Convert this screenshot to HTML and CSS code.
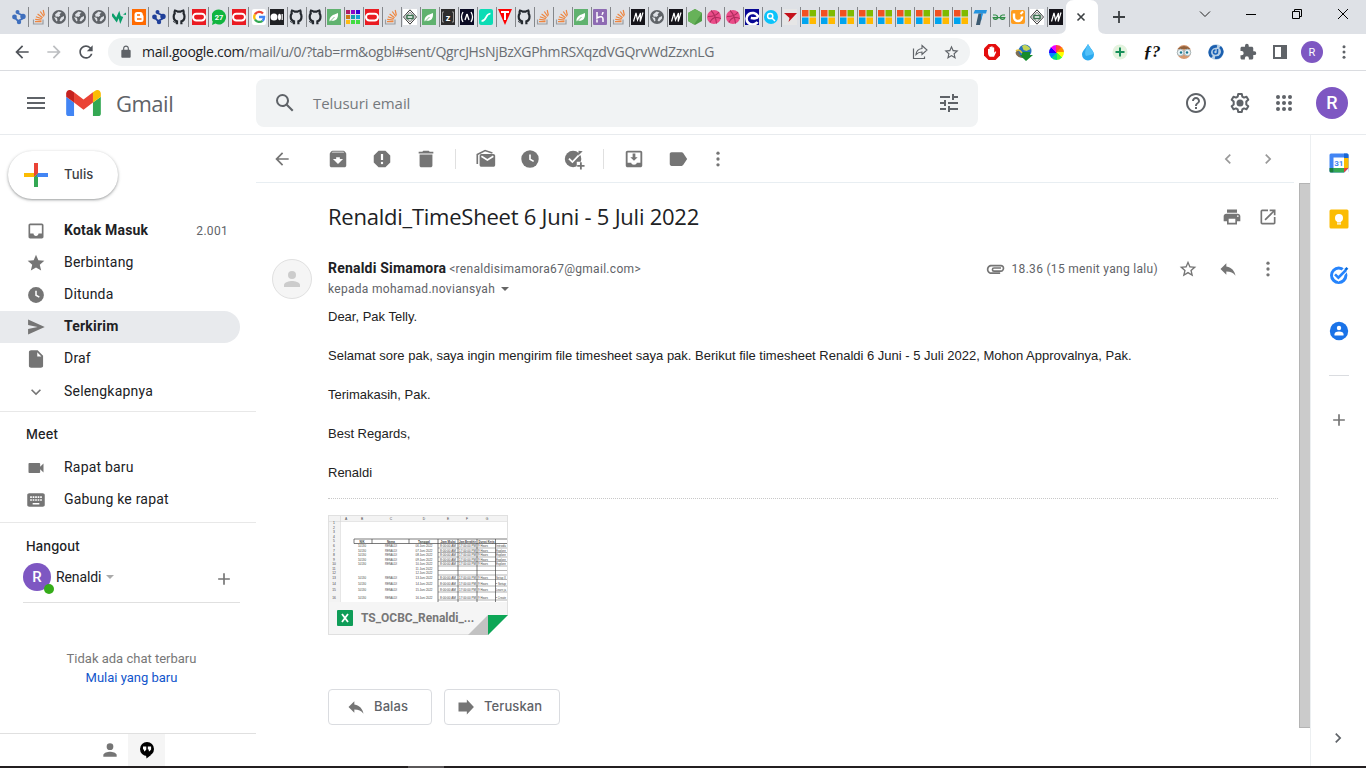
FILE: index.html
```html
<!DOCTYPE html>
<html lang="id">
<head>
<meta charset="utf-8">
<title>Renaldi_TimeSheet 6 Juni - 5 Juli 2022 - Gmail</title>
<link rel="stylesheet" href="styles.css">
</head>
<body>
<svg class="sprite" aria-hidden="true">
  <!-- Tab favicons, 14x16 -->
  <symbol id="f-nodes" viewBox="0 0 14 16"><path d="M5 4 L10 6 L10 10 L6 12 L2.500 8.500" fill="none" stroke="currentColor" stroke-width="1.800"/><circle cx="5.500" cy="3" r="2" fill="currentColor"/><circle cx="2.500" cy="8" r="2.400" fill="currentColor"/><circle cx="11" cy="7.500" r="2.700" fill="currentColor"/><circle cx="7" cy="13" r="2.200" fill="currentColor"/></symbol>
  <symbol id="f-so" viewBox="0 0 14 16"><path d="M1.500 10.500V15h9.500v-4.500" fill="none" stroke="#9a9da1" stroke-width="1.200"/><path d="M3 12.700h6.500M3.200 10.400l6.300.8M3.900 7.800l6 2M5.600 5l5 3.700M8.300 2.500l3.500 5M11.200 1l1.200 5.500" stroke="#ee8640" stroke-width="1.200"/></symbol>
  <symbol id="f-globe" viewBox="0 0 14 16"><circle cx="7" cy="8" r="7" fill="#5f6368"/><path d="M3 5.500l3.500-3 3 1-2 1.800.8 1.200-2 1.500-1.500-.8-.8 1.300M9 8.500l3-1.500v2.500l-3 3-1.500-1z" fill="#dee1e6"/><path d="M2 8l3 1 .5 2.500-1 1z" fill="#dee1e6"/></symbol>
  <symbol id="f-w" viewBox="0 0 14 16"><path d="M0 5l4.500 6L7 5.500 8.500 11 10 7.500" fill="none" stroke="#0b9f6b" stroke-width="2.600"/><path d="M11 5.500l3-2v2.500z" fill="#0b9f6b"/></symbol>
  <symbol id="f-blogger" viewBox="0 0 14 16"><path d="M0 0h14v16H0z" fill="#ff6a00"/><path d="M5.500 3h2.700a2.500 2.500 0 0 1 2.500 2.600l.8 1.400v3.500a2.500 2.500 0 0 1-2.500 2.500H5a2.500 2.500 0 0 1-2.500-2.500v-5A2.500 2.500 0 0 1 5.500 3z" fill="#fff"/><path d="M5 6h3M5 10h4.500" stroke="#ff6a00" stroke-width="1.300"/></symbol>
  <symbol id="f-github" viewBox="0 0 14 16"><path d="M5 15.300v-3C2.800 11.800 1.700 9.800 1.700 7.500c0-1.200.4-2.200 1-3C2.400 3.400 2.500 2.300 3 1.500c1.200.1 2 .6 2.700 1.100h2.900c.7-.5 1.500-1 2.700-1.100.4.800.5 1.900.3 3 .6.800.9 1.800.9 3 0 2.300-1 4.300-3.100 4.800v3" fill="none" stroke="#24292f" stroke-width="2.200"/><path d="M1 12.500c1.300 0 1.400 1.500 3.500 1.300" fill="none" stroke="#24292f"/></symbol>
  <symbol id="f-oracle" viewBox="0 0 14 16"><path d="M0 0h14v16H0z" fill="#ea1b22"/><rect x="1" y="4.800" width="12" height="6.600" rx="3.300" fill="none" stroke="#fff" stroke-width="2"/></symbol>
  <symbol id="f-google" viewBox="0 0 14 16"><rect width="14" height="16" rx="2" fill="#fff"/><path d="M11 4.500A5 5 0 0 0 3 5.300" fill="none" stroke="#ea4335" stroke-width="2.300"/><path d="M3 5.300a5 5 0 0 0 0 5.200" fill="none" stroke="#fbbc05" stroke-width="2.300"/><path d="M3 10.500a5 5 0 0 0 7.500 1.300" fill="none" stroke="#34a853" stroke-width="2.300"/><path d="M10.500 11.800A5 5 0 0 0 12.100 8H7" fill="none" stroke="#4285f4" stroke-width="2.300"/></symbol>
  <symbol id="f-medium" viewBox="0 0 14 16"><path d="M0 0h14v16H0z"/><circle cx="4" cy="8" r="3.500" fill="#fff"/><ellipse cx="9.500" cy="8" rx="1.500" ry="3.300" fill="#fff"/><path d="M12.200 5v6" stroke="#fff" stroke-width="1.200"/></symbol>
  <symbol id="f-leaf" viewBox="0 0 14 16"><path d="M0 0h14v16H0z" fill="#60b26f"/><path d="M2.500 12.500C2 7 6 6 11 4c.5 6-2.500 8.500-7 7.700z" fill="#fff"/><path d="M2.500 13l5-5" stroke="#60b26f" stroke-width=".8"/></symbol>
  <symbol id="f-grid" viewBox="0 0 14 16"><path d="M0 1h4v4H0z" fill="#b21e64"/><path d="M5 1h4v4H5z" fill="#8d06c7"/><path d="M10 1h4v4h-4z" fill="#3903d5"/><path d="M0 6h4v4H0z" fill="#ce7b13"/><path d="M5 6h4v4H5z" fill="#139db1"/><path d="M10 6h4v4h-4z" fill="#13a4d2"/><path d="M0 11h4v4H0z" fill="#ffbb12"/><path d="M5 11h9v4H5z" fill="#41dc42"/><path d="M9.500 11v4" stroke="#dee1e6"/></symbol>
  <symbol id="f-diamond" viewBox="0 0 14 16"><path d="M0 0h14v16H0z" fill="#fff"/><path d="M7 .8l6.500 7.200L7 15.200.5 8z" fill="none" stroke="#333"/><path d="M7 3.200L11.300 8 7 12.800 2.700 8z" fill="none" stroke="#444" stroke-width=".8"/><path d="M4 6.500h6v3H4z" fill="none" stroke="#3c7451" stroke-width="1.400"/></symbol>
  <symbol id="f-fcc" viewBox="0 0 14 16"><path d="M0 0h14v16H0z" fill="#0a0a23"/><path d="M3 3Q0 8 3 13M11 3q3 5 0 10M7 5L5 11M7 5l2 6" fill="none" stroke="#fff" stroke-width="1.300"/></symbol>
  <symbol id="f-teal" viewBox="0 0 14 16"><rect width="14" height="16" rx="2" fill="#0cdcb5"/><path d="M2.500 12c6 0 3-7 9-7.500" fill="none" stroke="#fff" stroke-width="1.700"/></symbol>
  <symbol id="f-t" viewBox="0 0 14 16"><path d="M0 0h14L7 16z" fill="#f00"/><path d="M3 3h8M7 3v8" stroke="#fff" stroke-width="2"/></symbol>
  <symbol id="f-heroku" viewBox="0 0 14 16"><rect width="14" height="16" rx="1" fill="#8e6bb3"/><path d="M4 3v6c4-2 6-1.500 6 1v3M10 3c0 1-.5 2-1.200 2.700M4 10.500v3" fill="none" stroke="#fff" stroke-width="1.500"/></symbol>
  <symbol id="f-m" viewBox="0 0 14 16"><path d="M0 0h14v16H0z" fill="#15141a"/><path d="M2.500 12.500L5 4l1.500 7L9.500 4l-.3 8.500 2.800-9" fill="none" stroke="#fff" stroke-width="1.200"/></symbol>
  <symbol id="f-node" viewBox="0 0 14 16"><path d="M7 0l7 4v8l-7 4-7-4V4z" fill="#4f9b46"/><path d="M7 0l7 4-8 11.500L0 12V4z" fill="#67b259"/></symbol>
  <symbol id="f-drib" viewBox="0 0 14 16"><circle cx="7" cy="8" r="7" fill="#ea4c89"/><path d="M4 1.500c3 3 5 7 5.500 13M1 7.500c5 0 9-1 11-4.500M3 13.500c2-5 6-6 11-4" fill="none" stroke="#ad2b5c" stroke-width="1.100"/></symbol>
  <symbol id="f-e" viewBox="0 0 14 16"><path d="M0 0h14v16H0z" fill="#070794"/><path d="M12.500 13A6 5.800 0 1 1 12.800 7c0 3-4.500 2.500-7 2" fill="none" stroke="#fff" stroke-width="2.600"/></symbol>
  <symbol id="f-search" viewBox="0 0 14 16"><circle cx="7" cy="8" r="7" fill="#0bc3fa"/><circle cx="6.200" cy="7" r="2.600" fill="none" stroke="#fff" stroke-width="1.500"/><path d="M8 9l3 3" stroke="#fff" stroke-width="1.500"/></symbol>
  <symbol id="f-red" viewBox="0 0 14 16"><path d="M0 0h14v16H0z" fill="#e6e6e6"/><path d="M1 4h13L5.500 13l1-4z" fill="#c4121b"/></symbol>
  <symbol id="f-ms" viewBox="0 0 14 16"><path d="M0 1h6.500v6.500H0z" fill="#f25022"/><path d="M7.500 1H14v6.500H7.500z" fill="#7fba00"/><path d="M0 8.500h6.500V15H0z" fill="#00a4ef"/><path d="M7.500 8.500H14V15H7.500z" fill="#ffb900"/></symbol>
  <symbol id="f-tt" viewBox="0 0 14 16"><path d="M2 1h12l-1 3.500H.5z" fill="#2494df"/><path d="M5.500 4.500h4L7 16H3z" fill="#3d5b72"/><path d="M8 4.500h2L8 12z" fill="#2494df"/></symbol>
  <symbol id="f-gg" viewBox="0 0 14 16"><path d="M1 6h2.500a2.200 2.200 0 1 1-2.300 2.600H12.800A2.200 2.200 0 1 1 10.500 6H13" fill="none" stroke="#2f8d46" stroke-width="1.200"/></symbol>
  <symbol id="f-u" viewBox="0 0 14 16"><rect y="1" width="14" height="14" rx="2" fill="#ff9d1e"/><path d="M3 4.500v3.500a4 4 0 0 0 8 0V7.500" fill="none" stroke="#fff" stroke-width="2.400"/><path d="M9.500 5L12 2.500" stroke="#fff" stroke-width="2"/></symbol>

  <!-- Interface icons, 24 grid -->
  <symbol id="i-back" viewBox="0 0 24 24"><path d="M20 11H7.830l5.590-5.590L12 4l-8 8 8 8 1.410-1.410L7.830 13H20v-2z"/></symbol>
  <symbol id="i-reload" viewBox="0 0 24 24"><path d="M17.650 6.350A7.958 7.958 0 0 0 12 4c-4.420 0-7.990 3.580-7.990 8s3.570 8 7.990 8c3.730 0 6.840-2.550 7.730-6h-2.080A5.990 5.990 0 0 1 12 18c-3.310 0-6-2.690-6-6s2.690-6 6-6c1.660 0 3.140.69 4.220 1.780L13 11h7V4l-2.350 2.350z"/></symbol>
  <symbol id="i-lock" viewBox="0 0 24 24"><path d="M18 8h-1V6c0-2.760-2.240-5-5-5S7 3.240 7 6v2H6c-1.100 0-2 .9-2 2v10c0 1.100.9 2 2 2h12c1.100 0 2-.9 2-2V10c0-1.100-.9-2-2-2zM9 8V6c0-1.660 1.340-3 3-3s3 1.340 3 3v2z"/></symbol>
  <symbol id="i-share" viewBox="0 0 16 16"><path d="M1.500 4.500v10h11v-2" fill="none" stroke="currentColor" stroke-width="1.200"/><path d="M10 1.500l5 4.500-5 4.500V8C7 8 5.500 9 4 10.500c.3-3.500 2-5.500 6-6z" fill="none" stroke="currentColor" stroke-width="1.100"/></symbol>
  <symbol id="i-staro" viewBox="0 0 24 24"><path d="M22 9.240l-7.190-.62L12 2 9.190 8.630 2 9.240l5.460 4.730L5.820 21 12 17.270 18.180 21l-1.630-7.030L22 9.240zM12 15.400l-3.760 2.270 1-4.280-3.320-2.880 4.380-.38L12 6.100l1.710 4.040 4.380.38-3.320 2.880 1 4.280L12 15.400z"/></symbol>
  <symbol id="i-star" viewBox="0 0 24 24"><path d="M12 17.270L18.180 21l-1.640-7.030L22 9.240l-7.190-.61L12 2 9.190 8.630 2 9.240l5.460 4.730L5.820 21z"/></symbol>
  <symbol id="i-puzzle" viewBox="0 0 24 24"><path d="M20.500 11H19V7c0-1.100-.9-2-2-2h-4V3.500a2.500 2.500 0 0 0-5 0V5H4c-1.100 0-1.990.9-1.990 2v3.800H3.500a2.700 2.700 0 0 1 0 5.400H2V20c0 1.100.9 2 2 2h3.800v-1.500a2.700 2.700 0 0 1 5.400 0V22H17c1.100 0 2-.9 2-2v-4h1.500a2.500 2.500 0 0 0 0-5z"/></symbol>
  <symbol id="i-more" viewBox="0 0 24 24"><circle cx="12" cy="5" r="2"/><circle cx="12" cy="12" r="2"/><circle cx="12" cy="19" r="2"/></symbol>
  <symbol id="i-menu" viewBox="0 0 24 24"><path d="M3 18h18v-2H3v2zm0-5h18v-2H3v2zm0-7v2h18V6H3z"/></symbol>
  <symbol id="i-search" viewBox="0 0 24 24"><path d="M20.490 19l-5.730-5.730C15.530 12.200 16 10.910 16 9.500A6.500 6.500 0 1 0 9.500 16c1.410 0 2.700-.47 3.770-1.240L19 20.490 20.490 19zM5 9.500C5 7.010 7.010 5 9.500 5S14 7.010 14 9.500 11.990 14 9.500 14 5 11.990 5 9.500z"/></symbol>
  <symbol id="i-tune" viewBox="0 0 24 24"><path d="M3 17v2h6v-2H3zM3 5v2h10V5H3zm10 16v-2h8v-2h-8v-2h-2v6h2zM7 9v2H3v2h4v2h2V9H7zm14 4v-2H11v2h10zm-6-4h2V7h4V5h-4V3h-2v6z"/></symbol>
  <symbol id="i-help" viewBox="0 0 24 24"><path d="M11 18h2v-2h-2v2zm1-16C6.480 2 2 6.480 2 12s4.480 10 10 10 10-4.480 10-10S17.520 2 12 2zm0 18c-4.410 0-8-3.590-8-8s3.590-8 8-8 8 3.590 8 8-3.590 8-8 8zm0-14c-2.210 0-4 1.790-4 4h2c0-1.100.9-2 2-2s2 .9 2 2c0 2-3 1.750-3 5h2c0-2.250 3-2.500 3-5 0-2.210-1.790-4-4-4z"/></symbol>
  <symbol id="i-gear" viewBox="0 0 24 24"><path d="M10.200 3h3.600l.5 2.600 1.700 1 2.500-.9 1.800 3.100-2 1.800v2.800l2 1.800-1.800 3.100-2.500-.9-1.700 1-.5 2.600h-3.600l-.5-2.600-1.700-1-2.500.9-1.800-3.100 2-1.800v-2.800l-2-1.800 1.800-3.100 2.500.9 1.700-1z" fill="none" stroke="currentColor" stroke-width="2" stroke-linejoin="round"/><circle cx="12" cy="12" r="3.500"/></symbol>
  <symbol id="i-apps" viewBox="0 0 24 24"><circle cx="6" cy="6" r="2"/><circle cx="12" cy="6" r="2"/><circle cx="18" cy="6" r="2"/><circle cx="6" cy="12" r="2"/><circle cx="12" cy="12" r="2"/><circle cx="18" cy="12" r="2"/><circle cx="6" cy="18" r="2"/><circle cx="12" cy="18" r="2"/><circle cx="18" cy="18" r="2"/></symbol>
  <symbol id="i-inbox" viewBox="0 0 24 24"><path d="M19 3H5c-1.100 0-2 .9-2 2v14c0 1.100.9 2 2 2h14c1.100 0 2-.9 2-2V5c0-1.100-.9-2-2-2zm0 12h-4c0 1.660-1.350 3-3 3s-3-1.340-3-3H5V5h14v10z"/></symbol>
  <symbol id="i-clock" viewBox="0 0 24 24"><circle cx="12" cy="12" r="9.500"/><path d="M12 7v5.300l4 2.300" fill="none" stroke="#fff" stroke-width="1.800"/></symbol>
  <symbol id="i-send" viewBox="0 0 24 24"><path d="M2.500 21L22.500 12 2.500 3v6.600L14 12 2.500 14.400z"/></symbol>
  <symbol id="i-draft" viewBox="0 0 24 24"><path d="M6 1.500c-1.100 0-2.500.9-2.500 2v17c0 1.100 1.400 2 2.500 2h12c1.100 0 2.500-.9 2.500-2V8l-6.500-6.500H6zM13.500 9V4L18.500 9h-5z"/></symbol>
  <symbol id="i-down" viewBox="0 0 24 24"><path d="M7.410 8.590L12 13.170l4.590-4.580L18 10l-6 6-6-6z"/></symbol>
  <symbol id="i-cam" viewBox="0 0 24 24"><path d="M17 10.500V7c0-.55-.45-1-1-1H4c-.55 0-1 .45-1 1v10c0 .55.45 1 1 1h12c.55 0 1-.45 1-1v-3.500l4 4v-11l-4 4z"/></symbol>
  <symbol id="i-keys" viewBox="0 0 24 24"><path d="M20 4H4c-1.500 0-2.500.9-2.500 2v12c0 1.100 1 2 2.500 2h16c1.500 0 2.500-.9 2.500-2V6c0-1.100-1-2-2.500-2zm-9 3.500h2v2h-2v-2zm0 3.500h2v2h-2v-2zM8 7.500h2v2H8v-2zM8 11h2v2H8v-2zm-1 2H5v-2h2v2zm0-3.500H5v-2h2v2zm9 8H8v-2h8v2zm0-4.500h-2v-2h2v2zm0-3.500h-2v-2h2v2zm3 3.500h-2v-2h2v2zm0-3.500h-2v-2h2v2z"/></symbol>
  <symbol id="i-archive" viewBox="0 0 24 24"><path d="M20.540 5.230l-1.390-1.680C18.880 3.210 18.470 3 18 3H6c-.47 0-.88.210-1.160.55L3.460 5.230C3.170 5.570 3 6.020 3 6.500V19c0 1.100.9 2 2 2h14c1.100 0 2-.9 2-2V6.500c0-.48-.17-.93-.46-1.270zM12 17.500L6.500 12H10v-2h4v2h3.500L12 17.500zM5.120 5l.81-1h12l.94 1H5.120z"/></symbol>
  <symbol id="i-spam" viewBox="0 0 24 24"><path d="M15.730 3H8.270L3 8.270v7.460L8.270 21h7.460L21 15.730V8.270L15.730 3zM12 17.600a1.300 1.300 0 1 1 0-2.600 1.300 1.300 0 0 1 0 2.600zm1.200-4.600h-2.400V6.500h2.400V13z"/></symbol>
  <symbol id="i-trash" viewBox="0 0 24 24"><path d="M5 19c0 1.100.9 2 2 2h10c1.100 0 2-.9 2-2V7H5v12zM20 4h-4l-1-1H9L8 4H4v2h16V4z"/></symbol>
  <symbol id="i-unread" viewBox="0 0 24 24"><path d="M22 8.500v10c0 1.100-.9 2-2 2H7c-1.100 0-2-.9-2-2v-10c0-1 .9-2 2-2h13c1.100 0 2 1 2 2z"/><path d="M7 9l6.500 4L20 9" fill="none" stroke="#fff" stroke-width="1.800"/><path d="M2.500 17.500V7L11 2.800l8 2.600" fill="none" stroke="currentColor" stroke-width="1.800"/></symbol>
  <symbol id="i-task" viewBox="0 0 24 24"><circle cx="11" cy="12" r="9"/><path d="M6.500 11.500l3.800 3.800L20 5" fill="none" stroke="#fff" stroke-width="2"/><path d="M17 3l4.500.5-5 5z"/><path d="M15 15h9v9h-9z" fill="#fff"/><path d="M19.500 15.500v8M15.500 19.500h8" stroke="currentColor" stroke-width="2"/></symbol>
  <symbol id="i-move" viewBox="0 0 24 24"><path d="M19 3H5c-1.100 0-2 .9-2 2v14c0 1.100.9 2 2 2h14c1.100 0 2-.9 2-2V5c0-1.100-.9-2-2-2zm0 13h-4c0 1.300-1.350 2.200-3 2.200s-3-.9-3-2.200H5V5h14zM16 10h-2.500V6h-3v4H8l4 4z"/></symbol>
  <symbol id="i-label" viewBox="0 0 24 24"><path d="M17.630 5.340C17.270 4.830 16.670 4.500 16 4.500H5c-1.100 0-2 .9-2 2v11c0 1.100.9 2 2 2h11c.67 0 1.270-.33 1.630-.84L22 12l-4.370-6.660z"/></symbol>
  <symbol id="i-left" viewBox="0 0 24 24"><path d="M15.410 7.410L14 6l-6 6 6 6 1.410-1.410L10.830 12z"/></symbol>
  <symbol id="i-right" viewBox="0 0 24 24"><path d="M8.590 16.590L10 18l6-6-6-6-1.410 1.410L13.170 12z"/></symbol>
  <symbol id="i-print" viewBox="0 0 24 24"><path d="M19 8H5c-1.660 0-3 1.340-3 3v6h4v4h12v-4h4v-6c0-1.660-1.340-3-3-3zm-3 11H8v-5h8v5zm3-7c-.55 0-1-.45-1-1s.45-1 1-1 1 .45 1 1-.45 1-1 1zm-1-9H6v4h12V3z"/></symbol>
  <symbol id="i-open" viewBox="0 0 24 24"><path d="M19 19H5V5h7V3H5a2 2 0 0 0-2 2v14a2 2 0 0 0 2 2h14c1.100 0 2-.9 2-2v-7h-2v7zM14 3v2h3.590l-9.830 9.830 1.410 1.410L19 6.410V10h2V3h-7z"/></symbol>
  <symbol id="i-clip" viewBox="0 0 24 24"><path d="M1 12.500C1 9.460 3.460 7 6.500 7H18c2.210 0 4 1.790 4 4s-1.790 4.500-4 4.500H9.500a2.750 2.750 0 0 1 0-5.500H18v1.800H9.410c-1 0-1 1.700 0 1.700H18c1.100 0 2-1.400 2-2.500s-.9-2-2-2H6.500C4.570 9 3 10.570 3 12.500S4.570 16 6.500 16H17v2H6.500C3.460 18 1 15.540 1 12.500z"/></symbol>
  <symbol id="i-reply" viewBox="0 0 24 24"><path d="M10 9V5l-7 7 7 7v-4.100c5 0 8.500 1.600 11 5.100-1-5-4-10-11-11z"/></symbol>
  <symbol id="i-forward" viewBox="0 0 24 24"><path d="M3 6.500h10V3l8.500 9-8.500 9v-3.500H3z"/></symbol>
  <symbol id="i-person" viewBox="0 0 24 24"><circle cx="12" cy="8" r="4"/><path d="M12 14c-2.670 0-8 1.340-8 4v2h16v-2c0-2.660-5.330-4-8-4z"/></symbol>
  <symbol id="i-plus" viewBox="0 0 24 24"><path d="M19 13h-6v6h-2v-6H5v-2h6V5h2v6h6v2z"/></symbol>
</svg>

<div class="tabs">
  <div class="tabgroup">
    <i class="tab wide blue"><svg><use href="#f-nodes"/></svg></i><i class="tab wide"><svg><use href="#f-so"/></svg></i><i class="tab wide"><svg><use href="#f-globe"/></svg></i><i class="tab wide"><svg><use href="#f-globe"/></svg></i><i class="tab wide"><svg><use href="#f-globe"/></svg></i><i class="tab wide"><svg><use href="#f-w"/></svg></i><i class="tab wide"><svg><use href="#f-blogger"/></svg></i><i class="tab wide navy"><svg><use href="#f-nodes"/></svg></i><i class="tab wide"><svg><use href="#f-github"/></svg></i><i class="tab wide"><svg><use href="#f-oracle"/></svg></i><i class="tab wide"><svg viewBox="0 0 14 16"><path d="M7 .5a7 7.500 0 1 1-3.500 14L0 16l.8-3.500A7.500 7.500 0 0 1 7 .5z" fill="#10b53f"/><text x="7" y="10.800" font-size="7.500" text-anchor="middle" class="glyph-white">27</text></svg></i><i class="tab wide"><svg><use href="#f-oracle"/></svg></i><i class="tab wide"><svg><use href="#f-google"/></svg></i>
    <i class="tab"><svg><use href="#f-medium"/></svg></i><i class="tab"><svg><use href="#f-github"/></svg></i><i class="tab"><svg><use href="#f-github"/></svg></i><i class="tab"><svg><use href="#f-leaf"/></svg></i><i class="tab"><svg><use href="#f-grid"/></svg></i><i class="tab"><svg><use href="#f-oracle"/></svg></i><i class="tab"><svg><use href="#f-so"/></svg></i><i class="tab"><svg><use href="#f-diamond"/></svg></i><i class="tab"><svg><use href="#f-leaf"/></svg></i><i class="tab"><svg viewBox="0 0 14 16"><path d="M0 0h14v16H0z" fill="#2d2d2d"/><text x="7" y="11.500" font-size="9" text-anchor="middle" class="glyph-white">z</text><path d="M3 3H1.500v10H3M11 3h1.500v10H11" fill="none" stroke="#999"/></svg></i><i class="tab"><svg><use href="#f-fcc"/></svg></i><i class="tab"><svg><use href="#f-teal"/></svg></i><i class="tab"><svg><use href="#f-t"/></svg></i><i class="tab"><svg><use href="#f-github"/></svg></i><i class="tab"><svg><use href="#f-so"/></svg></i><i class="tab"><svg><use href="#f-so"/></svg></i><i class="tab"><svg><use href="#f-leaf"/></svg></i><i class="tab"><svg><use href="#f-heroku"/></svg></i><i class="tab"><svg><use href="#f-so"/></svg></i><i class="tab"><svg><use href="#f-m"/></svg></i><i class="tab"><svg><use href="#f-globe"/></svg></i><i class="tab"><svg><use href="#f-m"/></svg></i><i class="tab"><svg><use href="#f-node"/></svg></i><i class="tab"><svg><use href="#f-drib"/></svg></i><i class="tab"><svg><use href="#f-drib"/></svg></i><i class="tab"><svg><use href="#f-e"/></svg></i><i class="tab"><svg><use href="#f-search"/></svg></i><i class="tab"><svg><use href="#f-red"/></svg></i><i class="tab"><svg><use href="#f-ms"/></svg></i><i class="tab"><svg><use href="#f-ms"/></svg></i><i class="tab"><svg><use href="#f-ms"/></svg></i><i class="tab"><svg><use href="#f-ms"/></svg></i><i class="tab"><svg><use href="#f-ms"/></svg></i><i class="tab"><svg><use href="#f-ms"/></svg></i><i class="tab"><svg><use href="#f-ms"/></svg></i><i class="tab"><svg><use href="#f-ms"/></svg></i><i class="tab"><svg><use href="#f-ms"/></svg></i><i class="tab"><svg><use href="#f-tt"/></svg></i><i class="tab"><svg><use href="#f-gg"/></svg></i><i class="tab"><svg><use href="#f-u"/></svg></i><i class="tab"><svg><use href="#f-diamond"/></svg></i><i class="tab last"><svg><use href="#f-m"/></svg></i>
  </div>
  <svg class="activetab" width="48" height="34" viewBox="0 0 48 34"><path d="M0 34q8 0 8-8V8q0-8 8-8h16q8 0 8 8v18q0 8 8 8z" fill="#fff"/><path d="M19.500 13.500l7 7m0-7l-7 7" stroke="#3c4043" stroke-width="1.600"/></svg>
  <svg class="newtab" width="12" height="12" viewBox="0 0 12 12"><path d="M6 0v12M0 6h12" stroke="#3c4043" stroke-width="1.800"/></svg>
  <div class="winctl">
    <svg viewBox="0 0 12 12"><path d="M1 3.500l5 5 5-5" fill="none" stroke="#222"/></svg>
    <svg viewBox="0 0 12 12"><path d="M1 6.500h10" stroke="#000"/></svg>
    <svg viewBox="0 0 12 12"><path d="M1.500 3.500h7v7h-7zM3.500 3.500v-2h7v7h-2" fill="none" stroke="#000"/></svg>
    <svg viewBox="0 0 12 12"><path d="M1 1l10 10M11 1L1 11" stroke="#000"/></svg>
  </div>
</div>

<div class="toolbar">
  <div class="navbtns">
    <svg class="ic20"><use href="#i-back"/></svg>
    <svg class="ic20 dim flip"><use href="#i-back"/></svg>
    <svg class="ic20"><use href="#i-reload"/></svg>
  </div>
  <div class="omnibox">
    <svg class="lock"><use href="#i-lock"/></svg>
    <span class="url"><span class="host">mail.google.com</span>/mail/u/0/?tab=rm&amp;ogbl#sent/QgrcJHsNjBzXGPhmRSXqzdVGQrvWdZzxnLG</span>
    <svg class="share"><use href="#i-share"/></svg>
    <svg class="bookmark"><use href="#i-staro"/></svg>
  </div>
  <div class="exts">
    <svg viewBox="0 0 18 18"><path d="M5.500 1h7L17 5.500v7L12.500 17h-7L1 12.500v-7z" fill="#e40d0d"/><path d="M5 9.500V6.200a.8.800 0 0 1 1.500 0V4.600a.8.800 0 0 1 1.600 0V4a.8.800 0 0 1 1.600 0v.7a.8.800 0 0 1 1.500 0v5l1-1.200c1-.4 1.200.4.800 1L11 13.700H6.700C5.500 12.500 5 11.500 5 9.500z" fill="#fff"/></svg>
    <svg viewBox="0 0 18 18"><ellipse cx="7" cy="11" rx="6.500" ry="4" fill="#7c6d55" transform="rotate(15 7 11)"/><circle cx="10" cy="8" r="6.500" fill="#2673bd"/><path d="M7 3c3-2 6-.5 8.500 3l-4 2-3-1z" fill="#c2d457"/><path d="M7 9h8v3h3l-7 6-6-6h2z" fill="#168c2c"/><path d="M1 8c2-2 4-1 6 2" fill="none" stroke="#e6c439" stroke-width="1.500"/></svg>
    <i class="wheel"></i>
    <svg viewBox="0 0 18 18"><path d="M9 1c2 4 6 7 6 10.500a6 6 0 0 1-12 0C3 8 7 5 9 1z" fill="#2ba9ef"/><path d="M9 1c2 4 5 7 6 10L7 13C5 10 7 5 9 1z" fill="#53c1f8"/></svg>
    <svg viewBox="0 0 18 18"><circle cx="9" cy="9" r="7.500" fill="#e3f3de"/><path d="M9 4.500v9M4.500 9h9" stroke="#17905a" stroke-width="2"/></svg>
    <span class="fq">ƒ?</span>
    <svg viewBox="0 0 18 18"><circle cx="9" cy="9" r="7" fill="#d79a71"/><path d="M2.500 6q6.500-6 13 0z" fill="#92623d"/><circle cx="5.500" cy="9.500" r="3.300" fill="#e9f2f4" stroke="#a9b7bb"/><circle cx="12.500" cy="9.500" r="3.300" fill="#e9f2f4" stroke="#a9b7bb"/><circle cx="6" cy="9.500" r="1.200" fill="#16768f"/><circle cx="12" cy="9.500" r="1.200" fill="#16768f"/></svg>
    <svg viewBox="0 0 18 18"><circle cx="9" cy="9" r="7.700" fill="#b7cfe5"/><path d="M5 14a6 6 0 0 1 5-10.500M13 4a6 6 0 0 1-5 10.500" fill="none" stroke="#1b5faf" stroke-width="2.600"/><path d="M10.500 6v3a2 2 0 1 1-2-2" fill="none" stroke="#1862b8" stroke-width="1.600"/></svg>
    <svg class="grey"><use href="#i-puzzle"/></svg>
    <svg class="grey" viewBox="0 0 18 18"><path d="M2 2h14v14H2zM4 4v10h6V4z" fill-rule="evenodd"/></svg>
    <span class="avatar small">R</span>
    <svg class="grey"><use href="#i-more"/></svg>
  </div>
</div>

<header class="header">
  <svg class="ic24 burger"><use href="#i-menu"/></svg>
  <svg class="logo" viewBox="52 42 88 66"><path fill="#4285f4" d="M58 108h14V74L52 59v43c0 3.320 2.690 6 6 6"/><path fill="#34a853" d="M120 108h14c3.320 0 6-2.690 6-6V59l-20 15"/><path fill="#fbbc04" d="M120 48v26l20-15v-8c0-7.420-8.470-11.650-14.400-7.200"/><path fill="#ea4335" d="M72 74V48l24 18 24-18v26L96 92"/><path fill="#c5221f" d="M52 51v8l20 15V48l-5.600-4.200c-5.940-4.450-14.400-.22-14.400 7.200"/></svg>
  <span class="brand">Gmail</span>
  <div class="search"><svg class="ic24"><use href="#i-search"/></svg><span class="ph">Telusuri email</span><svg class="ic24"><use href="#i-tune"/></svg></div>
  <div class="account">
    <svg class="ic24"><use href="#i-help"/></svg><svg class="ic24"><use href="#i-gear"/></svg><svg class="ic24"><use href="#i-apps"/></svg><span class="avatar big">R</span>
  </div>
</header>

<div class="app">
  <aside class="side">
    <div class="compose"><svg viewBox="0 0 24 24"><path d="M10 0h4v10l-4 4z" fill="#ea4335"/><path d="M10 14l4-4v14h-4z" fill="#34a853"/><path d="M0 10h10v4H0z" fill="#fbbc04"/><path d="M14 10h10v4H12.500z" fill="#4285f4"/><path d="M10 10h4l-4 4z" fill="#ea4335"/></svg><span>Tulis</span></div>
    <nav class="nav folders">
      <a class="strong"><svg><use href="#i-inbox"/></svg><span>Kotak Masuk</span><em>2.001</em></a>
      <a><svg><use href="#i-star"/></svg><span>Berbintang</span></a>
      <a><svg><use href="#i-clock"/></svg><span>Ditunda</span></a>
      <a class="strong current"><svg><use href="#i-send"/></svg><span>Terkirim</span></a>
      <a><svg><use href="#i-draft"/></svg><span>Draf</span></a>
      <a><svg><use href="#i-down"/></svg><span>Selengkapnya</span></a>
    </nav>
    <section class="block meet">
      <h3>Meet</h3>
      <nav class="nav"><a><svg><use href="#i-cam"/></svg><span>Rapat baru</span></a><a><svg><use href="#i-keys"/></svg><span>Gabung ke rapat</span></a></nav>
    </section>
    <section class="block hang">
      <h3>Hangout</h3>
      <div class="me"><span class="avatar mid">R<i class="dot"></i></span><span class="mename">Renaldi</span><i class="caret light"></i><svg class="ic20"><use href="#i-plus"/></svg></div>
      <p class="nochat"><span>Tidak ada chat terbaru</span><a>Mulai yang baru</a></p>
    </section>
    <div class="sidetabs"><span><svg class="ic20"><use href="#i-person"/></svg></span><span class="on"><svg viewBox="0 0 18 18"><circle cx="9" cy="8" r="7"/><path d="M8 14h5l-4.500 3.500z"/><path d="M5 5.500h3.300v3L6.800 10.300H6V8.500H5zM9.800 5.500h3.300v3l-1.500 1.800h-.8V8.500h-1z" fill="#fff"/></svg></span></div>
  </aside>

  <main class="main">
    <div class="actions">
      <svg class="a0"><use href="#i-back"/></svg>
      <svg><use href="#i-archive"/></svg><svg><use href="#i-spam"/></svg><svg><use href="#i-trash"/></svg>
      <i class="rule"></i>
      <svg><use href="#i-unread"/></svg><svg><use href="#i-clock"/></svg><svg><use href="#i-task"/></svg>
      <i class="rule"></i>
      <svg><use href="#i-move"/></svg><svg><use href="#i-label"/></svg><svg class="amore"><use href="#i-more"/></svg>
      <span class="pager"><svg><use href="#i-left"/></svg><svg><use href="#i-right"/></svg></span>
    </div>
    <div class="scroller">
      <article class="mail">
        <div class="subject"><h1>Renaldi_TimeSheet 6 Juni - 5 Juli 2022</h1><svg class="ic20"><use href="#i-print"/></svg><svg class="ic20"><use href="#i-open"/></svg></div>
        <div class="sender">
          <span class="face"><svg class="ic24"><use href="#i-person"/></svg></span>
          <div class="who">
            <div class="from"><b>Renaldi Simamora</b><span class="addr">&lt;renaldisimamora67@gmail.com&gt;</span></div>
            <div class="to"><span>kepada mohamad.noviansyah</span><i class="caret"></i></div>
          </div>
          <div class="meta"><svg class="clip"><use href="#i-clip"/></svg><span class="when">18.36 (15 menit yang lalu)</span><svg class="ic20"><use href="#i-staro"/></svg><svg class="ic20"><use href="#i-reply"/></svg><svg class="ic20"><use href="#i-more"/></svg></div>
        </div>
        <div class="body">
          <p>Dear, Pak Telly.</p>
          <p>Selamat sore pak, saya ingin mengirim file timesheet saya pak. Berikut file timesheet Renaldi 6 Juni - 5 Juli 2022, Mohon Approvalnya, Pak.</p>
          <p>Terimakasih, Pak.</p>
          <p>Best Regards,</p>
          <p>Renaldi</p>
        </div>
        <div class="attachment">
          <svg class="sheet" id="sheet" viewBox="0 0 178 86"></svg>
          <div class="fname"><svg viewBox="0 0 16 16"><rect width="16" height="16" rx="1" fill="#0f9d58"/><path d="M5 4l6 8M11 4l-6 8" stroke="#fff" stroke-width="1.800"/></svg><span>TS_OCBC_Renaldi_...</span></div>
          <svg class="fold" viewBox="0 0 40 20"><path d="M0 20L20 0v20z" fill="#c2c2c2"/><path d="M20 20h20V0z" fill="#fff"/><path d="M20 0h20L20 20z" fill="#0da656"/></svg>
        </div>
        <div class="replies"><span class="btn"><svg class="ic20"><use href="#i-reply"/></svg><span>Balas</span></span><span class="btn fwd"><svg class="ic20"><use href="#i-forward"/></svg><span>Teruskan</span></span></div>
      </article>
      <div class="bar"></div>
    </div>
  </main>

  <aside class="panel">
    <svg viewBox="0 0 20 20"><rect x=".5" y=".5" width="19" height="19" rx="1.500" fill="#4285f4"/><path d="M15 5h4.500v10H15z" fill="#fbbc04"/><path d="M15 .5h3a1.500 1.500 0 0 1 1.500 1.500v3H15z" fill="#1967d2"/><path d="M4.500 15H15v4.500H4.500z" fill="#34a853"/><path d="M.5 15h4v4.500H2A1.500 1.500 0 0 1 .5 18z" fill="#188038"/><path d="M19.500 15v5H15z" fill="#fff"/><path d="M15 15h4.500L15 19.500z" fill="#ea4335"/><path d="M4.500 4.500H15V15H4.500z" fill="#fff"/><text x="9.800" y="13" font-size="8" text-anchor="middle" class="cal">31</text></svg>
    <svg viewBox="0 0 20 20"><rect x=".5" y=".5" width="19" height="19" rx="1.500" fill="#fbbc04"/><circle cx="10" cy="9" r="4" fill="#fff"/><path d="M8 11h4v2.500H8zM8 14.300h4v1.200H8z" fill="#fff"/></svg>
    <svg viewBox="0 0 20 20"><circle cx="9.700" cy="10.300" r="7.200" fill="none" stroke="#2684fc" stroke-width="3"/><path d="M6 9.500l3.500 3.500 7-8" fill="none" stroke="#fff" stroke-width="5"/><path d="M6 9.300l3.400 3.400L17 5" fill="none" stroke="#2684fc" stroke-width="2.600"/><path d="M15.500 4l2-2 1.800 1.800-2 2z" fill="#0066da"/></svg>
    <svg viewBox="0 0 20 20"><circle cx="10" cy="10" r="9.200" fill="#1a73e8"/><circle cx="10" cy="7" r="2.200" fill="#fff"/><path d="M5.500 14.500v-1.200q0-2.800 4.500-2.800t4.500 2.800v1.200z" fill="#fff"/></svg>
    <i class="line"></i>
    <svg class="add"><use href="#i-plus"/></svg>
    <svg class="collapse"><use href="#i-right"/></svg>
  </aside>
</div>
<div class="taskbar"><i></i></div>
<script src="sheet.js"></script>
</body>
</html>
```
FILE: styles.css
```css
* { box-sizing: border-box; }
html, body { margin: 0; height: 100%; overflow: hidden; }
body { display: flex; flex-direction: column; width: 1366px; height: 768px; background: #fff; font-family: Roboto, "Liberation Sans", sans-serif; font-size: 14px; color: #202124; }
svg { fill: currentColor; flex: none; display: block; }
.sprite { position: absolute; width: 0; height: 0; }
i, em { font-style: normal; }
h1, h3, p { margin: 0; }
.glyph-white { fill: #fff; font-family: Roboto, sans-serif; font-weight: 700; }
.cal { fill: #4285f4; font-family: Roboto, sans-serif; font-weight: 700; }
.ic20 { width: 20px; height: 20px; }
.ic24 { width: 24px; height: 24px; }

.tabs { height: 34px; flex: none; background: #dee1e6; display: flex; align-items: center; padding-left: 9px; }
.tabgroup { display: flex; width: 1049px; flex: none; }
.tab { width: 19px; height: 20px; border-right: 1px solid #84878b; display: flex; align-items: center; padding-left: 1px; flex: none; }
.tab.wide { width: 20px; padding-left: 3px; }
.tab.last { border-color: transparent; }
.tab svg { width: 14px; height: 16px; }
.tab.blue { color: #3f6fbd; }
.tab.navy { color: #20409a; }
.activetab { margin-right: 7px; }
.winctl { margin-left: auto; display: flex; gap: 34px; padding-right: 17px; height: 28px; align-items: center; align-self: flex-start; }
.winctl svg { width: 12px; height: 12px; }

.toolbar { height: 37px; flex: none; border-bottom: 1px solid #dadce0; display: flex; align-items: center; color: #5f6368; }
.navbtns { display: flex; gap: 12px; padding-left: 12px; width: 108px; color: #50545a; }
.flip { transform: scaleX(-1); }
.dim { color: #bcbec1; }
.omnibox { width: 862px; height: 28px; border-radius: 14px; background: #f1f3f4; display: flex; align-items: center; padding: 0 10px 0 11px; }
.lock { width: 14px; height: 14px; margin-right: 9px; }
.url { font: 14px/20px "Open Sans", "Noto Sans", sans-serif; letter-spacing: -.3px; color: #6a6e73; white-space: nowrap; }
.host { color: #202124; }
.share { width: 16px; height: 16px; margin-left: auto; margin-right: 15px; }
.bookmark { width: 17px; height: 17px; }
.exts { display: grid; grid-template-columns: repeat(12, 32px); align-items: center; justify-items: center; padding-left: 6px; }
.exts > svg { width: 18px; height: 18px; }
.exts .grey { color: #5f6368; }
.wheel { width: 15px; height: 15px; border-radius: 50%; background: conic-gradient(#ff00b0, #f44 0 12%, #f80 0 25%, #ff0 0 37%, #4f3 0 50%, #0d8 0 62%, #08f 0 75%, #20f 0 87%, #e0f 0); }
.fq { font: italic 700 17px/18px "Liberation Serif", serif; color: #111; width: 18px; text-align: center; }
.avatar { background: #7e57c2; color: #fff; border-radius: 50%; display: flex; align-items: center; justify-content: center; flex: none; }
.small { width: 22px; height: 22px; font-size: 11px; }
.big { width: 32px; height: 32px; font-size: 18px; font-weight: 500; }
.mid { width: 28px; height: 28px; font-size: 15px; font-weight: 500; position: relative; }

.header { height: 64px; flex: none; border-bottom: 1px solid #e8ebee; display: flex; align-items: center; color: #5f6368; }
.burger { margin: 0 18px 0 24px; }
.logo { width: 35px; height: 26px; }
.brand { font: 22px/28px "Open Sans", sans-serif; width: 155px; padding-left: 15px; letter-spacing: -.5px; }
.search { width: 722px; height: 48px; background: #f1f3f4; border-radius: 8px; display: flex; align-items: center; padding: 0 17px; }
.ph { flex: 1; padding-left: 16px; font: 15px/20px "Open Sans", sans-serif; letter-spacing: -.05px; color: #75797d; }
.account { display: flex; align-items: center; gap: 20px; margin-left: auto; padding-right: 18px; }

.app { display: flex; flex: 1; min-height: 0; }
.side { width: 256px; flex: none; display: flex; flex-direction: column; padding-top: 16px; }
.compose { width: 110px; height: 48px; margin: 0 0 16px 8px; border-radius: 24px; box-shadow: 0 1px 2px rgba(60,64,67,.35), 0 1px 3px 1px rgba(60,64,67,.15); display: flex; align-items: center; padding-left: 16px; color: #3c4043; font: 500 14px/20px Lato, Roboto, sans-serif; letter-spacing: .25px; }
.compose svg { width: 24px; height: 24px; margin-right: 16px; }
.compose span, .btn span { margin-top: -2px; font: 500 13px/20px Inter, Roboto, sans-serif; letter-spacing: .1px; }
.nav a { display: flex; align-items: center; height: 32px; width: 240px; padding: 0 12px 0 26px; color: #202124; border-radius: 0 16px 16px 0; }
.nav svg { width: 20px; height: 20px; color: #757575; margin-right: 18px; }
.nav span { flex: 1; margin-top: -2px; letter-spacing: .2px; }
.nav em { font-size: 12px; color: #5f6368; letter-spacing: .3px; }
.folders a:last-child { height: 33px; padding-top: 1px; }
.strong span { font-weight: 700; }
.current { background: #e8eaed; }
.block { border-top: 1px solid #e8e8e8; }
.meet { margin-top: 3px; height: 111px; }
.block h3 { font: 500 13px/20px Inter, Roboto, sans-serif; padding: 12px 0 0 26px; letter-spacing: .1px; }
.meet .nav { padding-top: 8px; }
.hang { flex: 1; }
.hang h3 { padding-top: 13px; }
.me { display: flex; align-items: center; margin: 7px 16px 0 23px; height: 40px; border-bottom: 1px solid #e0e0e0; padding-bottom: 11px; }
.mename { padding: 0 5px; letter-spacing: -.1px; margin-top: -1px; }
.me svg { margin-left: auto; margin-right: 6px; color: #757575; position: relative; top: 2px; }
.dot { position: absolute; right: -3px; bottom: -3px; width: 10px; height: 10px; border-radius: 50%; background: #35ac19; }
.caret { border: 4px solid transparent; border-top-color: #666; border-bottom: 0; width: 0; height: 0; }
.caret.light { border-top-color: #aaa; }
.nochat { text-align: center; padding: 46px 0 0 7px; font-size: 13px; line-height: 19px; color: #777; display: flex; flex-direction: column; }
.nochat a { color: #15c; }
.sidetabs { height: 33px; border-top: 1px solid #e0e0e0; display: flex; padding-left: 91px; color: #757575; }
.sidetabs span { width: 37px; display: flex; align-items: center; justify-content: center; }
.sidetabs .on { background: #f5f5f5; color: #000; }
.on svg { width: 18px; height: 18px; }

.main { width: 1054px; flex: none; display: flex; flex-direction: column; }
.actions { height: 48px; width: 1038px; flex: none; border-bottom: 1px solid #e8eef2; display: flex; align-items: center; color: #757575; padding-left: 15px; }
.actions > svg { width: 22px; height: 22px; margin-right: 22px; }
.actions > .a0 { width: 22px; height: 20px; margin-right: 34px; }
.rule { width: 1px; height: 20px; background: #e0e0e0; margin: 0 19px 0 -4px; }
.actions > .amore { width: 20px; height: 20px; margin-left: -3px; }
.pager { margin-left: auto; display: flex; gap: 20px; padding-right: 16px; color: #999; }
.pager svg { width: 20px; height: 20px; }
.scroller { flex: 1; display: flex; min-height: 0; }
.mail { width: 1043px; padding: 20px 21px 0 16px; }
.bar { width: 11px; height: 545px; background: #cbcbcb; border: solid #b4b4b4; border-width: 1px 0 1px 1px; }
.subject { display: flex; align-items: center; padding-left: 56px; height: 28px; color: #757575; gap: 16px; }
.subject h1 { flex: 1; margin-top: -3px; font: 22px/28px "Open Sans", sans-serif; letter-spacing: -.24px; color: #202124; }
.sender { display: flex; margin-top: 28px; height: 48px; }
.face { width: 40px; height: 40px; border-radius: 50%; border: 1px solid #e0e0e0; background: #f5f5f5; color: #ccc; display: flex; align-items: center; justify-content: center; margin-right: 16px; }
.who { flex: 1; }
.from { line-height: 18px; color: #202124; display: flex; gap: 3px; letter-spacing: .2px; }
.addr { font-size: 12px; line-height: 20px; height: 18px; color: #5f6368; letter-spacing: .3px; }
.to { font-size: 12px; line-height: 20px; color: #5f6368; letter-spacing: .3px; padding-top: 2px; display: flex; align-items: center; gap: 6px; }
.meta { display: flex; align-items: center; height: 20px; color: #757575; }
.when { font-size: 12px; letter-spacing: .3px; color: #5f6368; margin: 0 20px 0 6px; }
.meta svg + svg { margin-left: 20px; }
.clip { width: 20px; height: 20px; }
.body { margin-left: 56px; border-bottom: 1px dotted #c8c8c8; height: 192px; font: 13px/19.5px "Liberation Sans", Arial, sans-serif; color: #222; }
.body p { margin-bottom: 19.5px; }
.attachment { position: relative; margin: 16px 0 54px 56px; width: 180px; height: 120px; border: 1px solid #e0e0e0; background: #f5f5f5; }
.sheet { width: 178px; height: 86px; background: #fff; }
.fname { display: flex; align-items: center; height: 32px; gap: 8px; padding-left: 8px; font: 700 12px/16px Roboto, sans-serif; color: #777; }
.fname svg { width: 16px; height: 16px; }
.fold { position: absolute; right: -1px; bottom: -1px; width: 40px; height: 20px; }
.replies { display: flex; gap: 12px; padding-left: 56px; }
.btn { height: 36px; border: 1px solid #dadce0; border-radius: 4px; display: flex; align-items: center; padding-left: 17px; width: 104px; gap: 8px; color: #5f6368; }
.btn.fwd { width: 116px; padding-left: 11px; }
.btn svg { color: #757575; }

.panel { flex: 1; border-left: 1px solid #eceff1; display: flex; flex-direction: column; align-items: center; padding: 18px 0 18px 1px; }
.panel > svg { width: 20px; height: 20px; margin-bottom: 36px; }
.line { width: 20px; height: 1px; background: #dadce0; margin: -2px 0 34px; }
.panel > .add { color: #757575; }
.panel > .collapse { margin: auto 2px 0 0; color: #5f6368; }
.taskbar { height: 2px; flex: none; background: #231f20; padding-left: 408px; display: flex; }
.taskbar i { width: 36px; background: #5a5758; }

.cell, .cellbold { font-family: "Liberation Sans", sans-serif; font-size: 3.3px; fill: #444; text-anchor: middle; }
.cellbold { font-weight: 700; }
```
FILE: sheet.js
```js
// Spreadsheet preview: column headers, row numbers, grid lines and cell text.
var svg = document.getElementById('sheet');
var out = '<path d="M0 0h178v5H0zM0 0h11v86H0z" fill="#f3f3f3"/><path d="M0 5.500h178M11.500 0v86" stroke="#d5d5d5" stroke-width=".6"/>';

function text(x, y, s, width, bold) {
  out += '<text x="' + x + '" y="' + y + '" class="' + (bold ? 'cellbold' : 'cell') + '"' +
    (width ? ' textLength="' + width + '" lengthAdjust="spacingAndGlyphs"' : '') + '>' + s + '</text>';
}

[[17, 'A'], [33, 'B'], [62, 'C'], [95, 'D'], [119, 'E'], [138, 'F'], [158, 'G']].forEach(function (c) { text(c[0], 4.2, c[1]); });
[[33, 'NIK', 5], [62, 'Nama', 8], [95, 'Tanggal', 12], [119, 'Jam Mulai', 15], [138.500, 'Jam Berakhir', 17], [157.500, 'Durasi Kerja', 16]].forEach(function (c) { text(c[0], 26.5, c[1], c[2], 1); });

var rows = [31, 35.5, 40, 44.5, 49, 53.5, 58, 62.5, 69, 75, 83];
var notes = ['Introdu', 'Explore', 'Explore', 'Explore', 'Explore', '', '', 'Setup X', '• Setup', 'Learn ja', '• Create'];
rows.forEach(function (y, i) {
  text(5, y, i + 6);
  text(95, y, (i < 4 ? '0' : '') + (i + 6) + ' Juni 2022', 17);
  if (notes[i]) {
    text(33, y, '10130', 8);
    text(62, y, 'RENALDI', 12);
    text(119, y, '8:00:00 AM', 16);
    text(138.5, y, '17:00:00 PM', 17);
    text(154, y, '9 Hours', 10);
    text(172, y, notes[i], 10);
  }
  out += '<path d="M109 ' + (y + 1) + 'h69" stroke="#666" stroke-width=".5"/>';
});
[8, 12.5, 17, 21.5, 26].forEach(function (y, i) { text(5, y, i + 1); });
out += '<path d="M25 23h153M25 27.500h153M25 23v4.500M43 23v4.500M80 23v4.500M109 23v63M129 23v63M148 23v63M166.500 23v63" fill="none" stroke="#444" stroke-width=".7"/>';
svg.innerHTML = out;
```
